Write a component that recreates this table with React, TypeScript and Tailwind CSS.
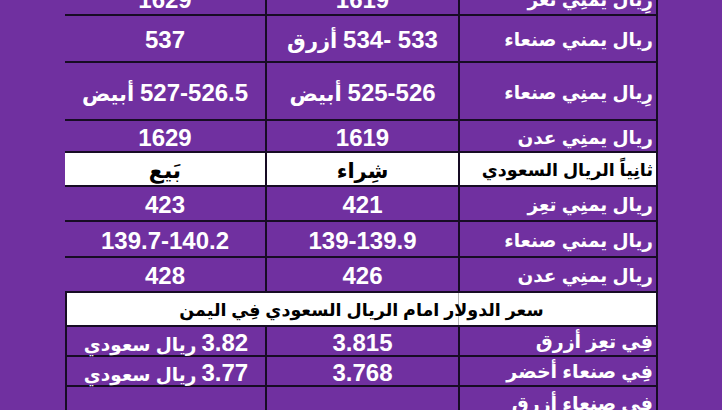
import React from "react";

type Cell = { t: string; s?: string };
type Row = {
  h: string;
  a: Cell;
  b: Cell;
  c: Cell;
  white?: boolean;
};

const L = "text-[18.5px]";

const rows: Row[] = [
  { h: "h-[34px]", a: { t: "1629" }, b: { t: "1619" }, c: { t: "رِيال يمنِي تعز", s: L } },
  { h: "h-[47px]", a: { t: "537" }, b: { t: "533 -534 أزرق", s: "text-[21px]" }, c: { t: "ريال يمني صنعاء", s: L } },
  { h: "h-[58px]", a: { t: "527-526.5 أبيض", s: "text-[21px]" }, b: { t: "525-526 أبيض", s: "text-[21px]" }, c: { t: "رِيال يمنِي صنعاء", s: L } },
  { h: "h-[32px]", a: { t: "1629" }, b: { t: "1619" }, c: { t: "ريال يمنِي عدن", s: L } },
  { h: "h-[34px]", a: { t: "بَيع", s: "text-[22px]" }, b: { t: "شِراء", s: "text-[21px]" }, c: { t: "ثانِياً الريال السعودي", s: "text-[17.5px]" }, white: true },
  { h: "h-[35px]", a: { t: "423" }, b: { t: "421" }, c: { t: "ريال يمنِي تعِز", s: L } },
  { h: "h-[36px]", a: { t: "139.7-140.2" }, b: { t: "139-139.9" }, c: { t: "ريال يمني صنعاء", s: L } },
  { h: "h-[35px]", a: { t: "428" }, b: { t: "426" }, c: { t: "ريال يمنِي عدن", s: L } },
];

const rows2: Row[] = [
  { h: "h-[30px]", a: { t: "3.82 ريال سعودي", s: "text-[18.5px]" }, b: { t: "3.815" }, c: { t: "فِي تعِز أزرق", s: "text-[19px]" } },
  { h: "h-[30px]", a: { t: "3.77 ريال سعودي", s: "text-[18.5px]" }, b: { t: "3.768" }, c: { t: "فِي صنعاء أخضر", s: "text-[19px]" } },
  { h: "h-[34px]", a: { t: "" }, b: { t: "" }, c: { t: "فِي صنعاء أزرق", s: "text-[19px]" } },
];

function Text({ c }: { c: Cell }) {
  const parts = c.t.split(/([0-9][0-9.\- ]*[0-9]|[0-9])/);
  return (
    <span dir="rtl" className="whitespace-nowrap">
      {parts.map((p, i) =>
        /[0-9]/.test(p) ? (
          <span key={i} className="text-[24px]">{p}</span>
        ) : (
          <span key={i} className={c.s ?? "text-[20px]"}>{p}</span>
        )
      )}
    </span>
  );
}

function TableRow({ r, left }: { r: Row; left?: boolean }) {
  const color = r.white ? "bg-white text-black" : "text-white";
  return (
    <div
      className={`flex ${r.h} border-b-2 border-[#170c24] ${color} ${
        left ? "border-l-2" : ""
      }`}
    >
      <div className={`${left ? "w-[198px]" : "w-[200px]"} flex items-center justify-center pt-[3px]`}>
        <Text c={r.a} />
      </div>
      <div className="w-[193px] border-l-2 border-[#170c24] flex items-center justify-center pt-[3px]">
        <Text c={r.b} />
      </div>
      <div className="w-[200px] border-l-2 border-r-2 border-[#170c24] flex items-center justify-end pr-[3px] pt-[3px]">
        <Text c={r.c} />
      </div>
    </div>
  );
}

export default function App() {
  return (
    <div
      className="w-[722px] h-[410px] overflow-hidden bg-[#7030a0] font-bold"
      style={{ fontFamily: '"Liberation Sans", "DejaVu Sans", sans-serif' }}
    >
      <div className="ml-[65px] w-[593px] -mt-[18px] flex flex-col">
        {rows.map((r, i) => (
          <TableRow key={i} r={r} />
        ))}
        <div className="relative flex items-center justify-center h-[34px] bg-white text-black border-2 border-t-0 border-[#170c24] pt-[3px]">
          <div className="absolute left-[391px] top-0 bottom-0 w-px bg-[#b8b8b8]" />
          <span className="relative">
            <Text c={{ t: "سعر الدولار امام الريال السعودي فِي اليمن", s: "text-[17.5px]" }} />
          </span>
        </div>
        {rows2.map((r, i) => (
          <TableRow key={i} r={r} left />
        ))}
      </div>
    </div>
  );
}
